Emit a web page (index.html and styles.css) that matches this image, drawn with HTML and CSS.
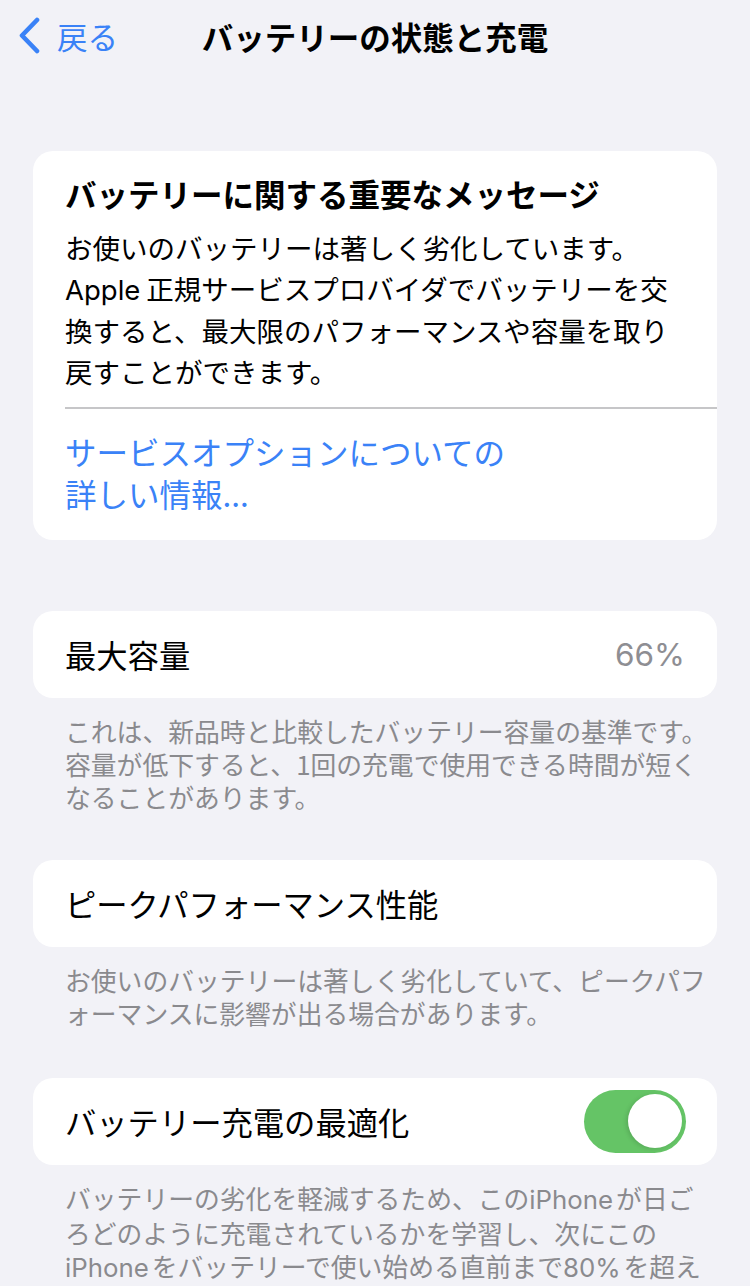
FILE: index.html
```html
<!DOCTYPE html>
<html lang="ja">
<head>
    <meta charset="UTF-8">
    <meta name="viewport" content="width=device-width, initial-scale=1.0">
    <title>バッテリーの状態と充電</title>
    <link rel="stylesheet" href="styles.css">
</head>
<body>
    <div class="nav">
        <a class="back" href="#">
            <svg class="chevron" width="24" height="38" viewBox="0 0 24 38">
                <path d="M19 3 L4 18.5 L19 34" fill="none" stroke="#3a82f7" stroke-width="4.6" stroke-linecap="round" stroke-linejoin="round"/>
            </svg>
            <span>戻る</span>
        </a>
        <h1 class="nav-title">バッテリーの状態と充電</h1>
        <div></div>
    </div>

    <div class="content">
        <div class="card message">
            <h2>バッテリーに関する重要なメッセージ</h2>
            <p class="message-text">お使いのバッテリーは著しく劣化しています。<br><span class="latin">Apple</span>正規サービスプロバイダでバッテリーを交<br>換すると、最大限のパフォーマンスや容量を取り<br>戻すことができます。</p>
            <div class="divider"></div>
            <a class="link" href="#">サービスオプションについての<br>詳しい情報...</a>
        </div>

        <div class="card row row-first">
            <span class="label">最大容量</span>
            <span class="value">66%</span>
        </div>
        <p class="footnote">これは、新品時と比較したバッテリー容量の基準です。<br>容量が低下すると、1回の充電で使用できる時間が短く<br>なることがあります。</p>

        <div class="card row">
            <span class="label">ピークパフォーマンス性能</span>
        </div>
        <p class="footnote">お使いのバッテリーは著しく劣化していて、ピークパフ<br>ォーマンスに影響が出る場合があります。</p>

        <div class="card row row-last">
            <span class="label">バッテリー充電の最適化</span>
            <div class="toggle on"><div class="knob"></div></div>
        </div>
        <p class="footnote">バッテリーの劣化を軽減するため、この<span class="latin">iPhone</span>が日ご<br>ろどのように充電されているかを学習し、次にこの<br><span class="latin">iPhone</span>をバッテリーで使い始める直前まで<span class="latin">80%</span>を超え<br>る充電を保留することがあります。</p>
    </div>
</body>
</html>
```

FILE: styles.css
```css
body {
    margin: 0;
    background-color: #f2f2f7;
    font-family: "Noto Sans CJK JP", "Inter", sans-serif;
    color: #000;
    overflow: hidden;
}
.nav {
    height: 72px;
    display: grid;
    grid-template-columns: 1fr auto 1fr;
    align-items: center;
}
.back {
    display: flex;
    align-items: center;
    padding-left: 18px;
    text-decoration: none;
    color: #3a82f7;
    font-size: 30.5px;
}
.back .chevron {
    margin-right: 15px;
}
.nav-title {
    margin: 0;
    font-size: 31.5px;
    font-weight: 700;
    letter-spacing: 0;
}
.content {
    padding: 79px 33px 0;
}
.card {
    background-color: white;
    border-radius: 20px;
}
.message {
    padding: 21px 0 26px 32px;
}
.message h2 {
    margin: 0;
    font-size: 31.5px;
    line-height: 42px;
    font-weight: 700;
}
.message-text {
    margin: 13px 0 0;
    font-size: 27.5px;
    line-height: 40.5px;
}
.latin {
    font-family: "Inter", "Noto Sans CJK JP", sans-serif;
    margin-right: 6px;
}
.divider {
    height: 1.5px;
    background-color: #c6c6c8;
    margin-top: 16px;
}
.link {
    display: block;
    margin-top: 21px;
    font-size: 31.5px;
    line-height: 42px;
    color: #3a82f7;
    text-decoration: none;
}
.row {
    height: 87px;
    display: flex;
    align-items: center;
    justify-content: space-between;
    padding: 0 32px;
    margin-top: 47px;
}
.row-first {
    margin-top: 71px;
}
.row-last {
    margin-top: 49px;
}
.label {
    font-size: 31.3px;
}
.value {
    font-family: "Inter", sans-serif;
    font-size: 31.5px;
    color: #8e8e93;
}
.footnote {
    margin: 16px 0 0;
    padding-left: 32px;
    font-size: 25.8px;
    line-height: 33px;
    color: #8a8a8e;
    white-space: nowrap;
}
.footnote .latin {
    margin-right: 3px;
}
.toggle {
    width: 102px;
    height: 63px;
    border-radius: 32px;
    background-color: #65c466;
    display: flex;
    align-items: center;
    justify-content: flex-end;
    padding: 0 4px;
    box-sizing: border-box;
    margin-right: -1px;
}
.knob {
    width: 54px;
    height: 54px;
    border-radius: 50%;
    background-color: white;
    box-shadow: -2px 1px 4px rgba(0, 0, 0, 0.12);
}
```
